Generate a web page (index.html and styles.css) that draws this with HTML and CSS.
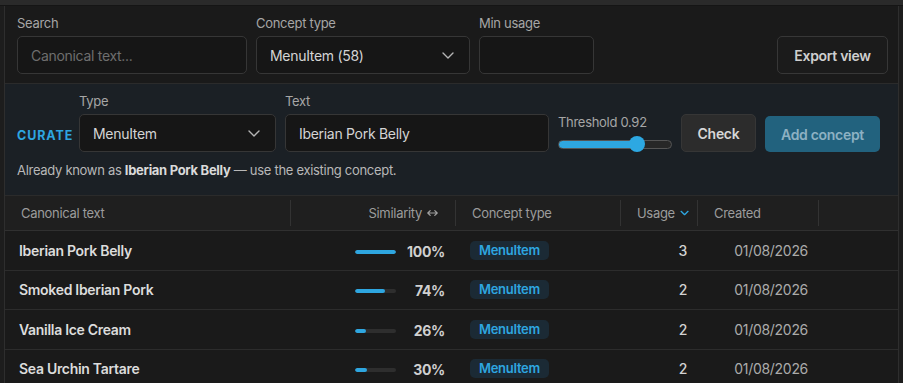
FILE: index.html
```html
<!DOCTYPE html>
<html lang="en">
<head>
<meta charset="utf-8">
<title>Concepts</title>
<link rel="stylesheet" href="styles.css">
</head>
<body>
<div class="topstrip"></div>
<div class="frame">
  <div class="filters">
    <div class="field w-search">
      <span class="label">Search</span>
      <input class="input" type="text" placeholder="Canonical text...">
    </div>
    <div class="field w-concept">
      <span class="label">Concept type</span>
      <div class="input select"><span>MenuItem (58)</span>
        <svg class="chev" width="12" height="7" viewBox="0 0 12 7"><path d="M1 1l5 5 5-5" fill="none" stroke="#b5b5b5" stroke-width="1.4" stroke-linecap="round" stroke-linejoin="round"/></svg>
      </div>
    </div>
    <div class="field w-min">
      <span class="label">Min usage</span>
      <input class="input" type="text">
    </div>
    <button class="btn export">Export view</button>
  </div>

  <div class="curate">
    <div class="curate-row">
      <span class="curate-tag">CURATE</span>
      <div class="field w-type">
        <span class="label">Type</span>
        <div class="input select"><span>MenuItem</span>
          <svg class="chev" width="12" height="7" viewBox="0 0 12 7"><path d="M1 1l5 5 5-5" fill="none" stroke="#b5b5b5" stroke-width="1.4" stroke-linecap="round" stroke-linejoin="round"/></svg>
        </div>
      </div>
      <div class="field w-text">
        <span class="label">Text</span>
        <input class="input" type="text" value="Iberian Pork Belly">
      </div>
      <div class="threshold">
        <span class="label">Threshold 0.92</span>
        <input class="range" type="range" min="0.7" max="1" step="0.01" value="0.92">
      </div>
      <button class="btn check">Check</button>
      <button class="btn add">Add concept</button>
    </div>
    <p class="note">Already known as <b>Iberian Pork Belly</b> — use the existing concept.</p>
  </div>

  <div class="table">
    <div class="thead">
      <div class="th">Canonical text</div>
      <div class="th right">Similarity
        <svg class="arrows" width="11" height="8" viewBox="0 0 11 8"><path d="M1 4h9M3.2 1.6L0.8 4l2.4 2.4M7.8 1.6L10.2 4 7.8 6.4" fill="none" stroke="#a0a0a0" stroke-width="1.2" stroke-linecap="round" stroke-linejoin="round"/></svg>
      </div>
      <div class="th">Concept type</div>
      <div class="th right usage-h">Usage
        <svg class="sortchev" width="10" height="6" viewBox="0 0 10 6"><path d="M1.2 1.2l3.8 3.6 3.8-3.6" fill="none" stroke="#2ea6e0" stroke-width="1.5" stroke-linecap="round" stroke-linejoin="round"/></svg>
      </div>
      <div class="th">Created</div>
      <div class="th last"></div>
    </div>

    <div class="tr">
      <div class="td name">Iberian Pork Belly</div>
      <div class="td sim"><span class="bar"><span class="fill" style="width:100%"></span></span><span class="pct">100%</span></div>
      <div class="td"><span class="badge">MenuItem</span></div>
      <div class="td num">3</div>
      <div class="td date">01/08/2026</div>
      <div class="td"></div>
    </div>
    <div class="tr">
      <div class="td name">Smoked Iberian Pork</div>
      <div class="td sim"><span class="bar"><span class="fill" style="width:74%"></span></span><span class="pct">74%</span></div>
      <div class="td"><span class="badge">MenuItem</span></div>
      <div class="td num">2</div>
      <div class="td date">01/08/2026</div>
      <div class="td"></div>
    </div>
    <div class="tr">
      <div class="td name">Vanilla Ice Cream</div>
      <div class="td sim"><span class="bar"><span class="fill" style="width:26%"></span></span><span class="pct">26%</span></div>
      <div class="td"><span class="badge">MenuItem</span></div>
      <div class="td num">2</div>
      <div class="td date">01/08/2026</div>
      <div class="td"></div>
    </div>
    <div class="tr">
      <div class="td name">Sea Urchin Tartare</div>
      <div class="td sim"><span class="bar"><span class="fill" style="width:30%"></span></span><span class="pct">30%</span></div>
      <div class="td"><span class="badge">MenuItem</span></div>
      <div class="td num">2</div>
      <div class="td date">01/08/2026</div>
      <div class="td"></div>
    </div>
  </div>
</div>
</body>
</html>
```

FILE: styles.css
```css
* { box-sizing: border-box; }
html, body { margin: 0; height: 100%; }
body {
  background: #1d1d1d;
  font-family: Inter, "Noto Sans", "Liberation Sans", sans-serif;
  color: #d6d6d6;
  overflow: hidden;
  letter-spacing: -0.3px;
}
.topstrip {
  height: 6px;
  background: #2a2a2a;
  border-bottom: 1px solid #151515;
}
.frame {
  margin: 0 4px;
  height: calc(100% - 6px);
  border-left: 1px solid #2e2e2e;
  border-right: 1px solid #2e2e2e;
  background: #1a1a1a;
  overflow: hidden;
}

/* filters */
.filters {
  display: flex;
  align-items: flex-end;
  gap: 9px;
  padding: 9px 10px 9px 12px;
  border-bottom: 1px solid #2b2b2b;
}
.field { display: flex; flex-direction: column; gap: 5px; flex-shrink: 0; }
.label { font-size: 13px; line-height: 16px; color: #a6a6a6; }
.w-search { width: 230px; }
.w-concept { width: 214px; }
.w-min { width: 115px; }
.w-type { width: 197px; }
.w-text { width: 264px; }
.input {
  height: 38px;
  width: 100%;
  border: 1px solid #363636;
  border-radius: 5px;
  background: #161616;
  padding: 0 13px;
  font: 14px Inter, "Noto Sans", sans-serif;
  letter-spacing: -0.3px;
  color: #d4d4d4;
  outline: none;
}
.input::placeholder { color: #6e6e6e; }
.select {
  display: flex;
  align-items: center;
  justify-content: space-between;
  padding-right: 15px;
}
.chev { display: block; }
.btn {
  height: 38px;
  border-radius: 5px;
  font: 600 14px Inter, "Noto Sans", sans-serif;
  letter-spacing: -0.3px;
  cursor: pointer;
  flex-shrink: 0;
}
.export {
  margin-left: auto;
  width: 111px;
  background: #1b1b1b;
  border: 1px solid #373737;
  color: #cfcfcf;
}

/* curate */
.curate {
  background: #1b2025;
  padding: 9px 17px 17px 12px;
  border-bottom: 1px solid #2b2b2b;
}
.curate-row {
  display: flex;
  align-items: flex-end;
  gap: 9px;
}
.curate-tag {
  width: 53px;
  flex-shrink: 0;
  font-size: 12.5px;
  font-weight: 700;
  letter-spacing: 0.9px;
  color: #2ea6e0;
  line-height: 38px;
  margin-bottom: -3px;
}
.threshold {
  width: 114px;
  flex-shrink: 0;
  height: 38px;
  display: flex;
  flex-direction: column;
  gap: 6px;
}
.range {
  -webkit-appearance: none;
  appearance: none;
  margin: 0;
  width: 114px;
  height: 16px;
  background: transparent;
}
.range::-webkit-slider-runnable-track {
  height: 9px;
  border-radius: 5px;
  border: 1px solid #555;
  background: linear-gradient(to right, #2ea6e0 0 72%, #272727 72%);
}
.range::-webkit-slider-thumb {
  -webkit-appearance: none;
  width: 16px;
  height: 16px;
  border-radius: 50%;
  background: #2da8e2;
  margin-top: -4.5px;
  border: none;
}
.check {
  width: 75px;
  background: #2c2c2c;
  border: 1px solid #363636;
  color: #d6d6d6;
}
.add {
  width: 115px;
  height: 36px;
  background: #22627e;
  border: none;
  color: #8db1c3;
}
.note {
  margin: 10px 0 0 0;
  font-size: 13px;
  line-height: 16px;
  color: #b8b8b8;
}
.note b { color: #dadada; font-weight: 700; }

/* table */
.thead, .tr {
  display: grid;
  grid-template-columns: 286px 165px 165px 77px 121px 1fr;
}
.thead {
  height: 35px;
  align-items: center;
  background: #1f1f1f;
  border-bottom: 1px solid #303030;
}
.th {
  height: 26px;
  line-height: 26px;
  border-right: 1px solid #333;
  font-size: 13px;
  color: #9c9c9c;
  padding: 0 16px;
  display: flex;
  align-items: center;
  gap: 5px;
}
.th.right { justify-content: flex-end; padding-right: 17px; }
.th.usage-h { padding-right: 8px; gap: 5px; }
.th.last { border-right: none; }
.arrows, .sortchev { display: block; }
.tr {
  height: 39.5px;
  align-items: center;
  border-bottom: 1px solid #2c2c2c;
  background: #1a1a1a;
}
.td { font-size: 14px; padding: 0 14px; }
.name { font-weight: 600; color: #dcdcdc; }
.sim {
  display: flex;
  align-items: center;
  justify-content: flex-end;
  padding-right: 11px;
}
.bar {
  display: block;
  width: 41px;
  height: 4px;
  border-radius: 2px;
  background: #2e2e2e;
  overflow: hidden;
  margin-top: 3px;
}
.fill { display: block; height: 100%; background: #2ea6e0; border-radius: 2px; }
.pct {
  width: 49px;
  text-align: right;
  font-weight: 700;
  color: #d0d0d0;
  margin-top: 2px;
}
.badge {
  display: inline-block;
  height: 19px;
  line-height: 19px;
  padding: 0 9px;
  border-radius: 5px;
  background: #1b2a35;
  color: #2ea6e0;
  font-size: 13px;
  font-weight: 600;
}
.num { text-align: right; padding-right: 11px; color: #d2d2d2; font-weight: 500; }
.date { text-align: right; padding-right: 11px; color: #ababab; }
```
